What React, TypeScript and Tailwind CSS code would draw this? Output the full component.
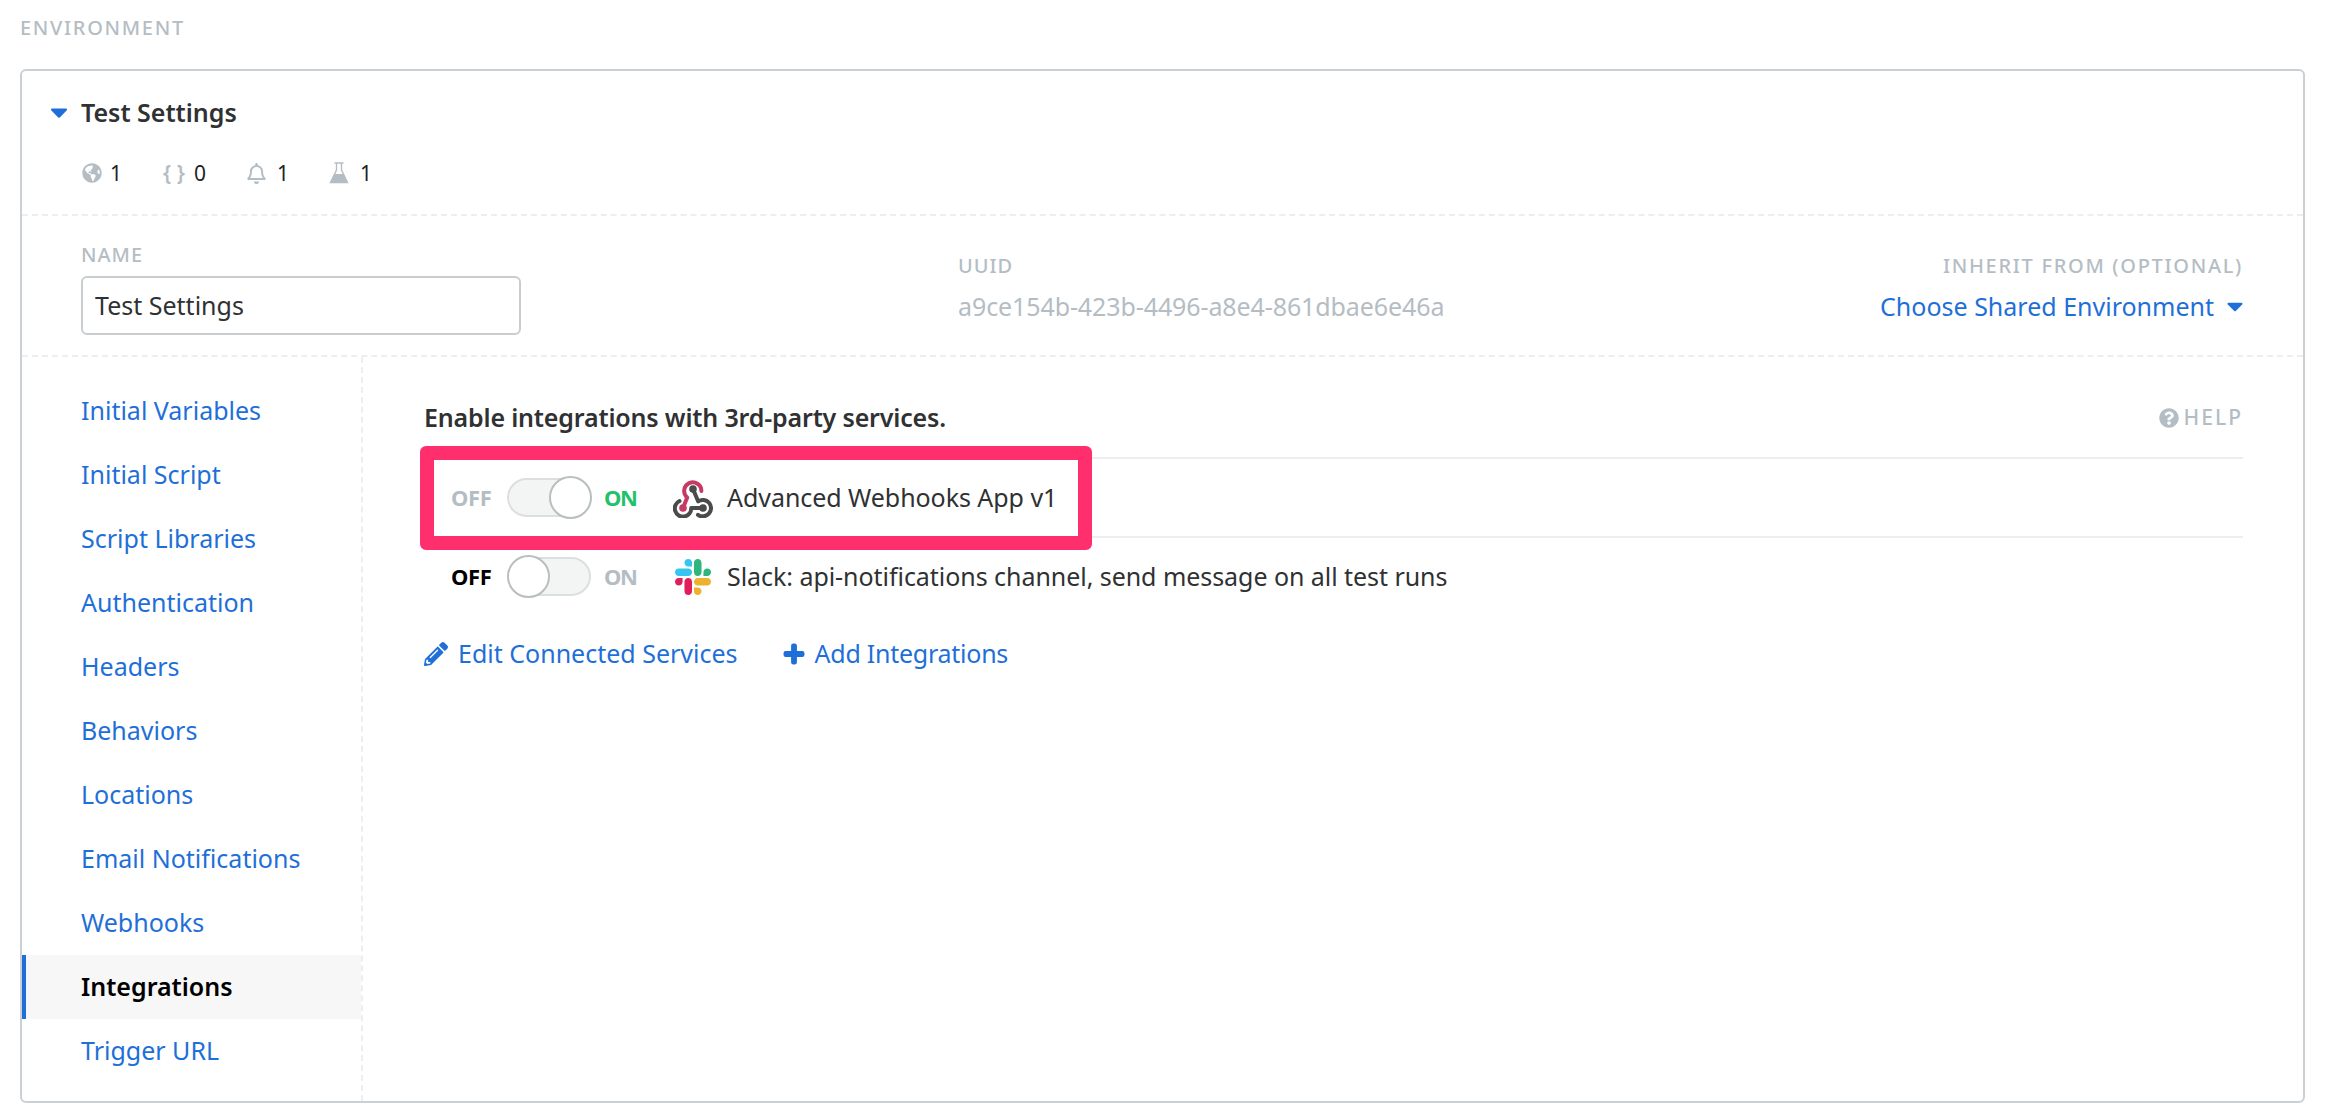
import { FaCaretDown, FaGlobeAmericas, FaPencilAlt, FaPlus, FaQuestionCircle, FaRegBell } from 'react-icons/fa';

const navItems = [
    'Initial Variables',
    'Initial Script',
    'Script Libraries',
    'Authentication',
    'Headers',
    'Behaviors',
    'Locations',
    'Email Notifications',
    'Webhooks',
    'Integrations',
    'Trigger URL',
];

function Toggle({ on }: { on: boolean }) {
    return (
        <div className={`flex h-[39px] w-[84px] rounded-full border-2 border-[#dcdfe1] bg-[#f3f4f4] items-center ${on ? 'justify-end' : 'justify-start'}`}>
            <div className={`h-[43px] w-[43px] shrink-0 rounded-full border-2 border-[#b9bebf] bg-white ${on ? '-mr-[3px]' : '-ml-[2px]'}`} />
        </div>
    );
}

function WebhookLogo() {
    return (
        <svg width="40" height="40" viewBox="0 0 40 40" fill="none" strokeWidth="4" strokeLinecap="round" strokeLinejoin="round">
            <path d="M10 30 L14.2 19.5 A8.6 8.6 0 1 1 28.4 13" stroke="#c73a63" />
            <path d="M6.5 23 A8.2 8.2 0 1 0 18.2 30 L30 30" stroke="#4b4b4b" />
            <path d="M25 36.8 A8.2 8.2 0 1 0 25.2 23.4 L20 11" stroke="#4b4b4b" />
            <circle cx="20" cy="11" r="3.8" fill="#4b4b4b" />
            <circle cx="10" cy="30" r="3.8" fill="#c73a63" />
            <circle cx="30" cy="30" r="3.8" fill="#4b4b4b" />
        </svg>
    );
}

function SlackLogo() {
    return (
        <svg width="36" height="36" viewBox="0 0 122.8 122.8">
            <path d="M25.8 77.6c0 7.1-5.8 12.9-12.9 12.9S0 84.7 0 77.6s5.8-12.9 12.9-12.9h12.9v12.9zm6.5 0c0-7.1 5.8-12.9 12.9-12.9s12.9 5.8 12.9 12.9v32.3c0 7.1-5.8 12.9-12.9 12.9s-12.9-5.8-12.9-12.9V77.6z" fill="#e01e5a" />
            <path d="M45.2 25.8c-7.1 0-12.9-5.8-12.9-12.9S38.1 0 45.2 0s12.9 5.8 12.9 12.9v12.9H45.2zm0 6.5c7.1 0 12.9 5.8 12.9 12.9s-5.8 12.9-12.9 12.9H12.9C5.8 58.1 0 52.3 0 45.2s5.8-12.9 12.9-12.9h32.3z" fill="#36c5f0" />
            <path d="M97 45.2c0-7.1 5.8-12.9 12.9-12.9s12.9 5.8 12.9 12.9-5.8 12.9-12.9 12.9H97V45.2zm-6.5 0c0 7.1-5.8 12.9-12.9 12.9s-12.9-5.8-12.9-12.9V12.9C64.7 5.8 70.5 0 77.6 0s12.9 5.8 12.9 12.9v32.3z" fill="#2eb67d" />
            <path d="M77.6 97c7.1 0 12.9 5.8 12.9 12.9s-5.8 12.9-12.9 12.9-12.9-5.8-12.9-12.9V97h12.9zm0-6.5c-7.1 0-12.9-5.8-12.9-12.9s5.8-12.9 12.9-12.9h32.3c7.1 0 12.9 5.8 12.9 12.9s-5.8 12.9-12.9 12.9H77.6z" fill="#ecb22e" />
        </svg>
    );
}

function FlaskIcon() {
    return (
        <svg width="20" height="22" viewBox="0 0 20 22" fill="none">
            <path d="M5.5 1h9M7.5 1v7L1.5 20.5h17L12.5 8V1" stroke="#b4bdc4" strokeWidth="1.4" />
            <path d="M5.5 12h9l4.5 9H1z" fill="#b4bdc4" />
        </svg>
    );
}

function IntegrationRow({ on, logo, label }: { on: boolean; logo: React.ReactNode; label: string }) {
    return (
        <div className="flex h-[77px] items-center pl-[27px] text-[25px] text-[#2f3133]">
            <span className={`w-[44px] text-[22px] font-bold tracking-[-0.4px] ${on ? 'text-[#b4bdc4]' : 'text-black'}`}>OFF</span>
            <div className="ml-[12px] w-[86px]">
                <Toggle on={on} />
            </div>
            <span className={`ml-[11px] w-[33px] text-[22px] font-bold tracking-[-1.5px] ${on ? 'text-[#22c16b]' : 'text-[#b4bdc4]'}`}>ON</span>
            <div className="ml-[36px] flex w-[40px] justify-center">{logo}</div>
            <span className="ml-[14px] whitespace-nowrap tracking-[-0.05px]">{label}</span>
        </div>
    );
}

export default function App() {
    return (
        <div className="flex h-[1118px] flex-col bg-white px-[20px] pt-[16px] font-['Noto_Sans',sans-serif] text-[25px] text-[#2f3133]">
            <div className="h-[24px] text-[20px] leading-[24px] font-medium tracking-[1.7px] text-[#b4bdc4]">ENVIRONMENT</div>
            <div className="mt-[29px] flex h-[1034px] flex-col rounded-[6px] border-2 border-[#c9d1d6]">
                <div className="h-[145px] shrink-0 border-b-2 border-dashed border-[#eceeef] px-[27px] pt-[24px]">
                    <div className="flex items-center">
                        <FaCaretDown className="h-[28px] w-[28px] text-[#1f6fd8] -ml-[4px]" />
                        <h1 className="ml-[8px] text-[25px] leading-[34px] font-semibold">Test Settings</h1>
                    </div>
                    <div className="mt-[32px] flex items-center pl-[33px] text-[21px] leading-[24px] text-[#222]">
                        <FaGlobeAmericas className="h-[20px] w-[20px] text-[#b4bdc4]" />
                        <span className="ml-[8px] w-[53px]">1</span>
                        <span className="w-[30px] font-semibold text-[#b4bdc4]">{'{ }'}</span>
                        <span className="ml-[1px] w-[52px]">0</span>
                        <FaRegBell className="h-[21px] w-[21px] text-[#b4bdc4]" />
                        <span className="ml-[10px] w-[52px]">1</span>
                        <FlaskIcon />
                        <span className="ml-[11px]">1</span>
                    </div>
                </div>
                <div className="flex h-[141px] shrink-0 border-b-2 border-dashed border-[#eceeef] pl-[59px] pr-[60px]">
                    <div className="w-[877px] pt-[27px]">
                        <div className="text-[20px] leading-[24px] font-medium tracking-[1px] text-[#b4bdc4]">NAME</div>
                        <div className="mt-[9px] flex h-[59px] w-[440px] items-center rounded-[6px] border-2 border-[#c9cdd0] pl-[12px]">Test Settings</div>
                    </div>
                    <div className="flex-1 pt-[38px]">
                        <div className="text-[20px] leading-[24px] font-medium tracking-[1px] text-[#b4bdc4]">UUID</div>
                        <div className="mt-[12px] leading-[32px] tracking-[-0.1px] text-[#b4bdc4]">a9ce154b-423b-4496-a8e4-861dbae6e46a</div>
                    </div>
                    <div className="pt-[38px] text-right">
                        <div className="text-[20px] leading-[24px] font-medium tracking-[1.7px] text-[#b4bdc4]">INHERIT FROM (OPTIONAL)</div>
                        <div className="mt-[12px] flex items-center justify-end leading-[32px] text-[#1f6fd8]">
                            Choose Shared Environment
                            <FaCaretDown className="ml-[8px] h-[26px] w-[26px] -mr-[5px]" />
                        </div>
                    </div>
                </div>
                <div className="flex flex-1">
                    <nav className="w-[341px] shrink-0 border-r-2 border-dashed border-[#eceeef] pt-[22px]">
                        {navItems.map((item) => (
                            <a
                                key={item}
                                className={
                                    item === 'Integrations'
                                        ? 'flex h-[64px] items-center border-l-4 border-[#1f6fd8] bg-[#f7f7f8] pl-[55px] font-semibold text-black'
                                        : 'flex h-[64px] items-center pl-[59px] text-[#1f6fd8]'
                                }
                            >
                                {item}
                            </a>
                        ))}
                    </nav>
                    <main className="flex-1 pl-[61px] pr-[60px] pt-[43px]">
                        <div className="flex h-[59px] items-start justify-between border-b-2 border-[#eceeef]">
                            <h2 className="text-[25px] leading-[34px] font-semibold tracking-[-0.17px]">Enable integrations with 3rd-party services.</h2>
                            <div className="flex h-[36px] items-center text-[21px] font-medium tracking-[2px] text-[#b4bdc4]">
                                <FaQuestionCircle className="mr-[5px] h-[20px] w-[20px]" />
                                HELP
                            </div>
                        </div>
                        <div className="relative border-b-2 border-[#eceeef]">
                            <IntegrationRow on logo={<WebhookLogo />} label="Advanced Webhooks App v1" />
                            <div className="absolute -top-[13px] left-[-4px] h-[104px] w-[672px] rounded-[6px] border-[14px] border-[#ff2f6e]" />
                        </div>
                        <IntegrationRow on={false} logo={<SlackLogo />} label="Slack: api-notifications channel, send message on all test runs" />
                        <div className="flex h-[78px] items-center text-[#1f6fd8]">
                            <FaPencilAlt className="h-[24px] w-[24px]" />
                            <span className="ml-[10px]">Edit Connected Services</span>
                            <FaPlus className="ml-[45px] h-[22px] w-[22px]" stroke="currentColor" strokeWidth={40} />
                            <span className="ml-[10px] tracking-[-0.25px]">Add Integrations</span>
                        </div>
                    </main>
                </div>
            </div>
        </div>
    );
}
